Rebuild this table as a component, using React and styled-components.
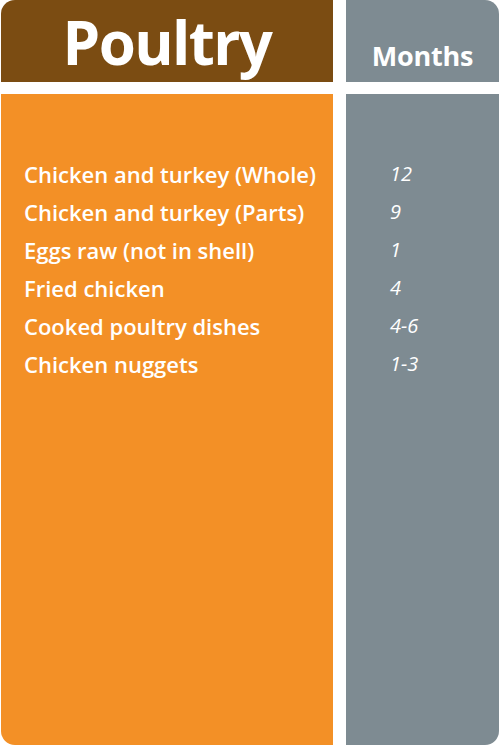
import styled, { createGlobalStyle } from "styled-components";

const GlobalStyle = createGlobalStyle`
  html, body {
    margin: 0;
    padding: 0;
    background: #ffffff;
  }
  body {
    font-family: "Open Sans", "Liberation Sans", sans-serif;
  }
`;

const Board = styled.div`
  width: 499px;
  height: 746px;
  box-sizing: border-box;
  padding-left: 1px;
  display: grid;
  grid-template-columns: 332px 153px;
  grid-template-rows: 82px 651px;
  column-gap: 13px;
  row-gap: 12px;
  color: #ffffff;
`;

const TitleCell = styled.div`
  background: #7b4c12;
  border-top-left-radius: 14px;
  display: flex;
  justify-content: center;
  align-items: flex-end;
`;

const Title = styled.h1`
  margin: 0 0 -1px;
  font-size: 60px;
  font-weight: 700;
  letter-spacing: -1.6px;
  line-height: 82px;
`;

const MonthsCell = styled.div`
  background: #7e8b92;
  border-top-right-radius: 14px;
  display: flex;
  justify-content: center;
  align-items: flex-end;
  padding-bottom: 13px;
`;

const MonthsTitle = styled.h2`
  margin: 0;
  font-size: 27px;
  font-weight: 700;
  letter-spacing: -0.2px;
  line-height: 1;
`;

const Column = styled.ul`
  list-style: none;
  margin: 0;
  padding: ${(p) => (p.$side === "left" ? "61px 0 0 23px" : "61px 0 0 44px")};
  background: ${(p) => (p.$side === "left" ? "#f39026" : "#7e8b92")};
  border-bottom-left-radius: ${(p) => (p.$side === "left" ? "14px" : "0")};
  border-bottom-right-radius: ${(p) => (p.$side === "left" ? "0" : "14px")};
`;

const Item = styled.li`
  font-size: ${(p) => (p.$value ? "20px" : "22px")};
  line-height: 38px;
  font-weight: ${(p) => (p.$value ? 400 : 600)};
  font-style: ${(p) => (p.$value ? "italic" : "normal")};
  white-space: nowrap;
`;

const rows = [
  ["Chicken and turkey (Whole)", "12"],
  ["Chicken and turkey (Parts)", "9"],
  ["Eggs raw (not in shell)", "1"],
  ["Fried chicken", "4"],
  ["Cooked poultry dishes", "4-6"],
  ["Chicken nuggets", "1-3"],
];

export default function App() {
  return (
    <>
      <GlobalStyle />
      <Board>
        <TitleCell>
          <Title>Poultry</Title>
        </TitleCell>
        <MonthsCell>
          <MonthsTitle>Months</MonthsTitle>
        </MonthsCell>
        <Column $side="left">
          {rows.map(([name]) => (
            <Item key={name}>{name}</Item>
          ))}
        </Column>
        <Column $side="right">
          {rows.map(([name, months]) => (
            <Item key={name} $value>
              {months}
            </Item>
          ))}
        </Column>
      </Board>
    </>
  );
}
